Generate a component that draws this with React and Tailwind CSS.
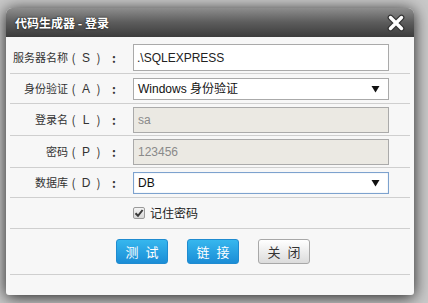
import React from "react";

const cjk = { fontFamily: '"Noto Sans CJK SC", "Liberation Sans", sans-serif' };
const mix = { fontFamily: '"Liberation Sans", "Noto Sans CJK SC", sans-serif' };

function Label({ name, k }) {
  return (
    <div className="w-[109px] shrink-0 flex justify-end items-center text-[11px] leading-none text-[#333]" style={cjk}>
      <span>{name}</span>
      <span className="w-[11px] text-center text-[12px]">(</span>
      <span className="w-[14px] text-center text-[12px]" style={mix}>{k}</span>
      <span className="w-[11px] text-center text-[12px]">)</span>
      <span className="w-[15px] pl-[8px] text-left text-[12px] font-bold">:</span>
    </div>
  );
}

function Arrow() {
  return (
    <svg width="9" height="8" viewBox="0 0 9 8" className="absolute right-[8px] top-1/2 -translate-y-1/2">
      <path d="M0.5 1 L8.5 1 L4.5 7.5 Z" fill="#111" />
    </svg>
  );
}

export default function App() {
  return (
    <div className="w-[428px] h-[303px] bg-[#c9c9c9] pt-[8px] pl-[6px] overflow-hidden">
      <div className="w-[408px] h-[287px] rounded-t-[6px] rounded-b-[3px] bg-[#f7f7f7] shadow-[0_2px_16px_rgba(0,0,0,0.85)] flex flex-col">
        {/* title bar */}
        <div className="h-[29px] rounded-t-[6px] bg-gradient-to-b from-[#8e8e8e] via-[#5c5c5c] to-[#3c3c3c] flex items-center justify-between pl-[9px] pr-[9px]">
          <span
            className="text-white font-bold text-[12px] leading-none [text-shadow:0_0_2px_rgba(0,0,0,0.95)]"
            style={cjk}
          >
            代码生成器 - 登录
          </span>
          <svg width="18" height="18" viewBox="0 0 18 18">
            <path d="M3.5 3.5 L14.5 14.5 M14.5 3.5 L3.5 14.5" stroke="#333" strokeWidth="5.8" strokeLinecap="round" />
            <path d="M3.5 3.5 L14.5 14.5 M14.5 3.5 L3.5 14.5" stroke="#fff" strokeWidth="3.4" strokeLinecap="round" />
          </svg>
        </div>

        {/* body */}
        <div className="flex flex-col px-[4px] pt-[5px]">
          <div className="h-[32px] flex items-center border-b border-[#cfcfcf]">
            <Label name="服务器名称" k="S" />
            <div className="ml-[14px] w-[256px] h-[27px] border border-[#aaaaaa] bg-white flex items-center pl-[3px] text-[12px] text-[#222]" style={mix}>
              .\SQLEXPRESS
            </div>
          </div>

          <div className="h-[30px] flex items-center border-b border-[#cfcfcf]">
            <Label name="身份验证" k="A" />
            <div className="relative ml-[14px] w-[256px] h-[22px] border border-[#aaaaaa] bg-white flex items-center pl-[4px] text-[12px] text-[#111]" style={mix}>
              Windows 身份验证
              <Arrow />
            </div>
          </div>

          <div className="h-[32px] flex items-center border-b border-[#cfcfcf]">
            <Label name="登录名" k="L" />
            <div className="ml-[14px] w-[256px] h-[26px] border border-[#aaaaaa] bg-[#ebe9e3] flex items-center pl-[4px] text-[12px] text-[#8a8a8a]" style={mix}>
              sa
            </div>
          </div>

          <div className="h-[32px] flex items-center border-b border-[#cfcfcf]">
            <Label name="密码" k="P" />
            <div className="ml-[14px] w-[256px] h-[26px] border border-[#aaaaaa] bg-[#ebe9e3] flex items-center pl-[4px] text-[12px] text-[#8a8a8a]" style={mix}>
              123456
            </div>
          </div>

          <div className="h-[30px] flex items-center border-b border-[#cfcfcf]">
            <Label name="数据库" k="D" />
            <div className="relative ml-[14px] w-[256px] h-[22px] border border-[#7da2ce] shadow-[inset_0_0_1px_rgba(125,162,206,0.8)] bg-white flex items-center pl-[4px] text-[12px] text-[#111]" style={mix}>
              DB
              <Arrow />
            </div>
          </div>

          <div className="h-[31px] flex items-center border-b border-[#cfcfcf] pl-[123px]">
            <div className="w-[12px] h-[12px] rounded-[2px] border border-[#9a9a9a] bg-gradient-to-b from-[#f4f4f4] to-[#d8d8d8] flex items-center justify-center">
              <svg width="10" height="10" viewBox="0 0 10 10">
                <path d="M1.5 5.2 L4 7.8 L8.6 2" stroke="#3a3a3a" strokeWidth="2" fill="none" />
              </svg>
            </div>
            <span className="ml-[5px] text-[12px] text-[#222] leading-none" style={cjk}>
              记住密码
            </span>
          </div>

          <div className="h-[46px] flex items-center justify-center gap-[19px] pl-[6px] border-b border-[#cfcfcf]">
            <button className="w-[52px] h-[25px] rounded-[3px] border border-[#1f8bd0] bg-gradient-to-b from-[#36b7ee] to-[#1b8dd6] text-white text-[13px] tracking-[7px] pl-[7px] leading-none" style={cjk}>
              测试
            </button>
            <button className="w-[52px] h-[25px] rounded-[3px] border border-[#1f8bd0] bg-gradient-to-b from-[#36b7ee] to-[#1b8dd6] text-white text-[13px] tracking-[7px] pl-[7px] leading-none" style={cjk}>
              链接
            </button>
            <button className="w-[52px] h-[25px] rounded-[3px] border border-[#a8a8a8] bg-gradient-to-b from-[#ffffff] to-[#dcdcdc] text-[#333] text-[13px] tracking-[7px] pl-[7px] leading-none" style={cjk}>
              关闭
            </button>
          </div>
        </div>
      </div>
    </div>
  );
}
